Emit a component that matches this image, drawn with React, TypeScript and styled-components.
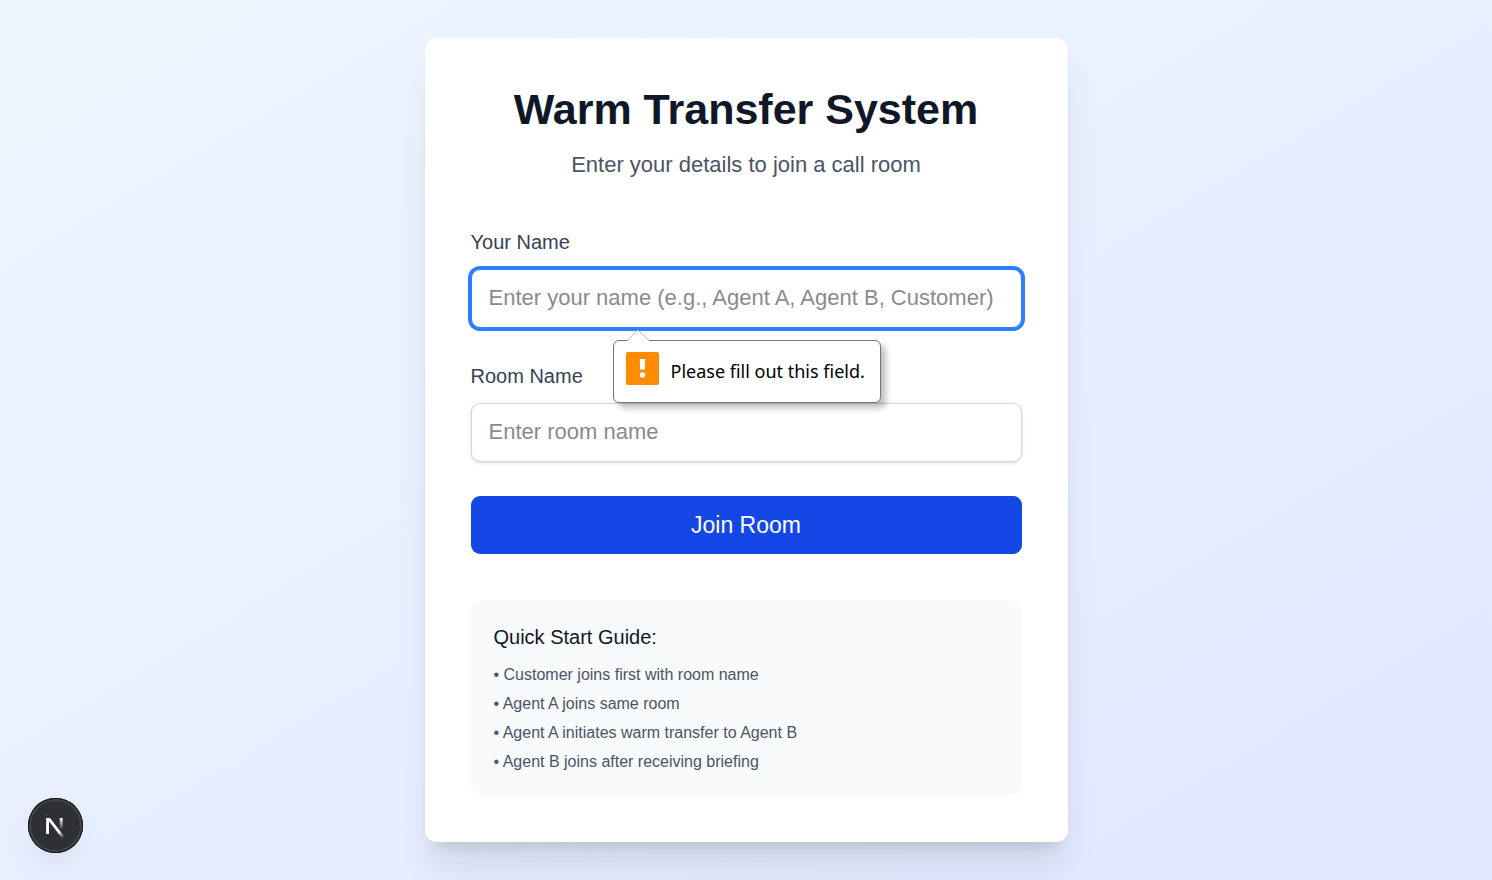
import React, { useState } from "react";
import styled, { createGlobalStyle } from "styled-components";

const GlobalStyle = createGlobalStyle`
  *, *::before, *::after { box-sizing: border-box; }
  body { margin: 0; font-family: "Liberation Sans", Arial, sans-serif; }
`;

const Page = styled.main`
  min-height: 100vh;
  display: flex;
  align-items: center;
  justify-content: center;
  padding: 23px;
  background: linear-gradient(to bottom right, #eff6ff, #e0e7ff);
`;

const Card = styled.section`
  width: 100%;
  max-width: 643px;
  padding: 46px;
  border-radius: 12px;
  background: #ffffff;
  box-shadow: 0 29px 36px -7px rgba(0, 0, 0, 0.1), 0 12px 14px -9px rgba(0, 0, 0, 0.1);
`;

const Header = styled.header`
  margin-bottom: 46px;
  text-align: center;
`;

const Title = styled.h1`
  margin: 0 0 13px;
  font-size: 43px;
  line-height: 50px;
  font-weight: 700;
  color: #101828;
`;

const Subtitle = styled.p`
  margin: 0;
  font-size: 22px;
  line-height: 35px;
  color: #4a5565;
`;

const Form = styled.form`
  display: flex;
  flex-direction: column;
  gap: 34px;
`;

const Field = styled.div`
  position: relative;
  display: flex;
  flex-direction: column;
  gap: 13px;
`;

const Label = styled.label`
  font-size: 20px;
  line-height: 28px;
  font-weight: 500;
  color: #364153;
`;

const Input = styled.input<{ $active?: boolean }>`
  width: 100%;
  height: 59px;
  padding: 0 17px 1px;
  border: 1px solid ${(p) => (p.$active ? "#2b7fff" : "#d1d5dc")};
  border-radius: 9px;
  outline: none;
  background: #ffffff;
  color: #101828;
  font-family: inherit;
  font-size: 22px;
  box-shadow: ${(p) =>
    p.$active
      ? "0 0 0 3px #2b7fff"
      : "0 1px 4px rgba(0, 0, 0, 0.1), 0 1px 3px -1px rgba(0, 0, 0, 0.1)"};

  &::placeholder { color: #8b8b8b; opacity: 1; }
  &:focus { border-color: #2b7fff; box-shadow: 0 0 0 3px #2b7fff; }
`;

const SubmitButton = styled.button`
  height: 58px;
  border: 0;
  border-radius: 9px;
  background: #1447e6;
  color: #ffffff;
  font-family: inherit;
  font-size: 23px;
  font-weight: 500;
  line-height: 35px;
  cursor: pointer;
`;

const Bubble = styled.div`
  position: absolute;
  z-index: 1;
  top: 100%;
  left: 142px;
  margin-top: 12px;
  min-width: 268px;
  height: 63px;
  display: flex;
  align-items: center;
  gap: 12px;
  padding: 0 12px;
  border: 1px solid #767676;
  border-radius: 6px;
  background: #ffffff;
  box-shadow: 5px 5px 6px rgba(0, 0, 0, 0.25);
  color: #000000;
  font-family: "Noto Sans", "Open Sans", sans-serif;
  font-size: 18px;
  line-height: 27px;
  white-space: nowrap;
`;

const BubbleArrow = styled.svg`
  position: absolute;
  bottom: 100%;
  left: 12px;
`;

const BubbleIcon = styled.svg`
  align-self: flex-start;
  margin-top: 11px;
`;

const Guide = styled.section`
  margin-top: 46px;
  padding: 23px;
  border-radius: 12px;
  background: #f9fafb;
`;

const GuideTitle = styled.h2`
  margin: 0 0 11px;
  font-size: 20px;
  line-height: 29px;
  font-weight: 500;
  color: #101828;
`;

const GuideList = styled.ul`
  display: flex;
  flex-direction: column;
  gap: 6px;
  margin: 0;
  padding: 0;
  list-style: none;
  font-size: 16px;
  line-height: 23px;
  color: #4a5565;
`;

const DevButton = styled.button`
  position: fixed;
  left: 28px;
  bottom: 27px;
  width: 55px;
  height: 55px;
  display: flex;
  align-items: center;
  justify-content: center;
  padding: 0;
  border: 0;
  border-radius: 50%;
  background: #2e3033;
  box-shadow: inset 0 0 0 1px #171717, inset 0 0 0 3px #434446,
    0 16px 32px -8px rgba(0, 0, 0, 0.1);
  cursor: pointer;
`;

const steps = [
  "Customer joins first with room name",
  "Agent A joins same room",
  "Agent A initiates warm transfer to Agent B",
  "Agent B joins after receiving briefing",
];

function AlertIcon() {
  return (
    <BubbleIcon width="33" height="33" viewBox="0 0 33 33" aria-hidden="true">
      <rect width="33" height="33" rx="2" fill="#ff8c00" />
      <path d="M13.8 7h5.4l-.3 10.500h-4.800z" fill="#fff" />
      <circle cx="16.5" cy="23" r="2.7" fill="#fff" />
    </BubbleIcon>
  );
}

function NextLogo() {
  return (
    <svg width="55" height="55" viewBox="0 0 55 55" fill="none" aria-hidden="true">
      <defs>
        <linearGradient id="diagonal" gradientUnits="userSpaceOnUse" x1="9.96" y1="11.12" x2="15.48" y2="17.97">
          <stop stopColor="#fff" />
          <stop offset="0.604" stopColor="#fff" stopOpacity="0" />
          <stop offset="1" stopColor="#fff" stopOpacity="0" />
        </linearGradient>
        <linearGradient id="stem" gradientUnits="userSpaceOnUse" x1="11.82" y1="1.4" x2="11.79" y2="9.63">
          <stop stopColor="#fff" />
          <stop offset="1" stopColor="#fff" stopOpacity="0" />
        </linearGradient>
        <mask id="trim" maskUnits="userSpaceOnUse" x="-4" y="-4" width="24" height="24">
          <rect x="-4" y="0" width="24" height="24" fill="#fff" />
          <rect x="0" y="0" width="5" height="1.5" fill="#000" />
        </mask>
      </defs>
      <g transform="translate(16.2 17.8) scale(1.44)">
        <path d="M13.3 15.2 2.34 1V12.6" stroke="url(#diagonal)" strokeWidth="2" mask="url(#trim)" />
        <path d="M11.825 1.5V13.1" stroke="url(#stem)" strokeWidth="2" />
      </g>
    </svg>
  );
}

export default function App() {
  const [name, setName] = useState("");
  const [room, setRoom] = useState("");
  const nameMissing = name === "";

  return (
    <>
      <GlobalStyle />
      <Page>
        <Card>
          <Header>
            <Title>Warm Transfer System</Title>
            <Subtitle>Enter your details to join a call room</Subtitle>
          </Header>
          <Form noValidate onSubmit={(e) => e.preventDefault()}>
            <Field>
              <Label htmlFor="name">Your Name</Label>
              <Input
                id="name"
                type="text"
                required
                $active={nameMissing}
                placeholder="Enter your name (e.g., Agent A, Agent B, Customer)"
                value={name}
                onChange={(e) => setName(e.target.value)}
              />
              {nameMissing && (
                <Bubble role="alert">
                  <BubbleArrow width="24" height="12" viewBox="0 0 24 12" aria-hidden="true">
                    <path d="M1 12 12 1 23 12z" fill="#fff" />
                    <path d="M1.500 11 12 1 22.500 11" fill="none" stroke="#b4b4b4" />
                  </BubbleArrow>
                  <AlertIcon />
                  <span>Please fill out this field.</span>
                </Bubble>
              )}
            </Field>
            <Field>
              <Label htmlFor="room">Room Name</Label>
              <Input
                id="room"
                type="text"
                required
                placeholder="Enter room name"
                value={room}
                onChange={(e) => setRoom(e.target.value)}
              />
            </Field>
            <SubmitButton type="submit">Join Room</SubmitButton>
          </Form>
          <Guide>
            <GuideTitle>Quick Start Guide:</GuideTitle>
            <GuideList>
              {steps.map((step) => (
                <li key={step}>• {step}</li>
              ))}
            </GuideList>
          </Guide>
        </Card>
      </Page>
      <DevButton type="button" aria-label="Open Next.js Dev Tools">
        <NextLogo />
      </DevButton>
    </>
  );
}
